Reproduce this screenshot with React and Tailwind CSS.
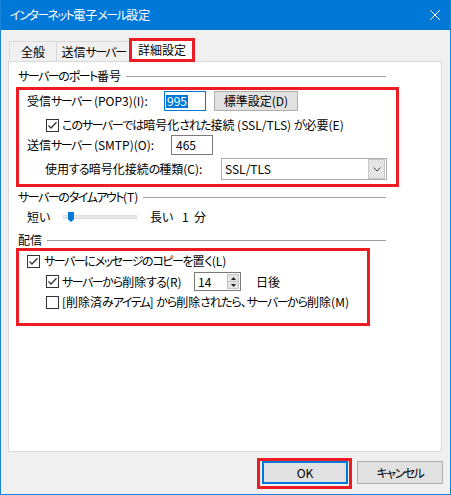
import React from "react";

const J = ({ children }) => {
  const parts = String(children).split(/([\u30A0-\u30FF]+|[\u3040-\u309F]+)/);
  return (
    <>
      {parts.map((p, i) => {
        if (!p) return null;
        if (/^[\u30A0-\u30FF]+$/.test(p))
          return (
            <span key={i} className="tracking-[-1.5px]">
              {p}
            </span>
          );
        if (/^[\u3040-\u309F]+$/.test(p))
          return (
            <span key={i} className="tracking-[-1px]">
              {p}
            </span>
          );
        return <React.Fragment key={i}>{p}</React.Fragment>;
      })}
    </>
  );
};

const Check = ({ checked }) => (
  <svg width="13" height="13" viewBox="0 0 13 13" className="shrink-0">
    <rect x="0.5" y="0.5" width="12" height="12" fill="white" stroke="#333333" />
    {checked && (
      <path d="M2.5 6.5 L5 9 L10.5 3.2" fill="none" stroke="#333333" strokeWidth="1.3" />
    )}
  </svg>
);

const GroupHeader = ({ label }) => (
  <div className="flex items-center h-[16px] ml-[2px] w-[368px] shrink-0">
    <span className="whitespace-nowrap">
      <J>{label}</J>
    </span>
    <div className="flex-1 h-px bg-[#a0a0a0] ml-[5px]" />
  </div>
);

export default function App() {
  return (
    <div className="w-[451px] h-[495px] flex flex-col bg-[#f0f0f0] border-x border-b border-[#1883d7] text-[12px] text-black font-['Noto_Sans_CJK_JP',sans-serif] [font-feature-settings:'palt'] leading-none select-none overflow-hidden">
      {/* Title bar */}
      <div className="h-[30px] -mx-px bg-[#0078d7] flex items-center pl-[10px] pr-[11px] text-white shrink-0">
        <span className="flex-1">
          <J>インターネット電子メール設定</J>
        </span>
        <svg width="10" height="10" viewBox="0 0 10 10">
          <path d="M0 0 L10 10 M10 0 L0 10" stroke="white" strokeWidth="1" />
        </svg>
      </div>

      {/* Tabs */}
      <div className="mt-[8px] h-[24px] pl-[8px] flex items-end -mb-px relative z-10 shrink-0">
        <div className="w-[48px] h-[21px] border border-b-0 border-[#d9d9d9] flex items-center justify-center">
          全般
        </div>
        <div className="w-[74px] h-[21px] border border-b-0 border-l-0 border-[#d9d9d9] flex items-center justify-center">
          <J>送信サーバー</J>
        </div>
        <div className="w-[66px] h-[24px] -ml-[2px] border-[3px] border-[#ed1c24] bg-white flex items-center justify-center">
          詳細設定
        </div>
      </div>

      {/* Panel */}
      <div className="ml-[7px] w-[434px] h-[391px] bg-white border border-[#d9d9d9] pt-[6px] pl-[7px] flex flex-col shrink-0">
        <GroupHeader label="サーバーのポート番号" />

        <div className="mt-[3px] w-[383px] border-[3px] border-[#ed1c24] pt-px pb-[4px] pl-[8px] flex flex-col">
          {/* Row 1 */}
          <div className="h-[20px] flex items-center">
            <span className="w-[137px] whitespace-nowrap">
              <J>受信サーバー (POP3)(I):</J>
            </span>
            <div className="w-[42px] h-[20px] border border-[#0078d7] flex items-center pl-px">
              <span className="bg-[#0078d7] text-white h-[13px] flex items-center px-px">995</span>
            </div>
            <div className="ml-[8px] w-[84px] h-[20px] border border-[#adadad] bg-[#e1e1e1] flex items-center justify-center">
              標準設定(D)
            </div>
          </div>
          {/* Row 2 */}
          <div className="mt-[5px] h-[18px] flex items-center ml-[19px] gap-[3px]">
            <Check checked />
            <span className="whitespace-nowrap">
              <J>このサーバーでは暗号化された接続 (SSL/TLS) が必要(E)</J>
            </span>
          </div>
          {/* Row 3 */}
          <div className="mt-px h-[20px] flex items-center">
            <span className="w-[144px] whitespace-nowrap">
              <J>送信サーバー (SMTP)(O):</J>
            </span>
            <div className="w-[42px] h-[20px] border border-[#7a7a7a] flex items-center pl-[4px]">465</div>
          </div>
          {/* Row 4 */}
          <div className="mt-[3px] h-[22px] flex items-center">
            <span className="ml-[18px] w-[176px] whitespace-nowrap">
              <J>使用する暗号化接続の種類(C):</J>
            </span>
            <div className="w-[166px] h-[22px] border border-[#adadad] bg-white flex items-center">
              <span className="flex-1 pl-[3px]">SSL/TLS</span>
              <div className="w-[17px] h-[20px] mr-px border border-[#c8c8c8] bg-[#e5e5e5] flex items-center justify-center">
                <svg width="8" height="5" viewBox="0 0 8 5">
                  <path d="M0.5 0.5 L4 4 L7.5 0.5" fill="none" stroke="#444" strokeWidth="1" />
                </svg>
              </div>
            </div>
          </div>
        </div>

        <div className="mt-[2px]">
          <GroupHeader label="サーバーのタイムアウト(T)" />
        </div>

        {/* Slider row */}
        <div className="mt-[4px] h-[16px] flex items-center ml-[11px]">
          <span className="w-[36px]">
            <J>短い</J>
          </span>
          <div className="relative w-[74px] h-[4px] bg-[#e7e7e7] border border-[#dcdcdc]">
            <svg className="absolute left-[4px] -top-[4px]" width="6" height="10" viewBox="0 0 6 10">
              <path d="M0 0 H6 V7.5 L3 10 L0 7.5 Z" fill="#0078d7" />
            </svg>
          </div>
          <span className="ml-[13px] w-[32px]">
            <J>長い</J>
          </span>
          <span>1&nbsp;&nbsp;分</span>
        </div>

        <div className="mt-[7px]">
          <GroupHeader label="配信" />
        </div>

        <div className="w-[354px] border-[3px] border-[#ed1c24] pt-[2px] pb-[13px] pl-[8px] flex flex-col">
          <div className="h-[16px] flex items-center gap-[4px]">
            <Check checked />
            <span className="whitespace-nowrap">
              <J>サーバーにメッセージのコピーを置く(L)</J>
            </span>
          </div>
          <div className="mt-[3px] h-[19px] flex items-center ml-[19px]">
            <div className="w-[148px] flex items-center gap-[3px]">
              <Check checked />
              <span className="whitespace-nowrap">
                <J>サーバーから削除する(R)</J>
              </span>
            </div>
            <div className="w-[47px] h-[19px] border border-[#7a7a7a] flex">
              <span className="flex-1 pl-[3px] flex items-center">14</span>
              <div className="w-[14px] flex flex-col p-px">
                <div className="flex-1 bg-[#e5e5e5] border border-[#c5c5c5] flex items-center justify-center">
                  <svg width="5" height="3" viewBox="0 0 5 3">
                    <path d="M0 3 L2.5 0 L5 3 Z" fill="#222" />
                  </svg>
                </div>
                <div className="flex-1 bg-[#e5e5e5] border border-t-0 border-[#c5c5c5] flex items-center justify-center">
                  <svg width="5" height="3" viewBox="0 0 5 3">
                    <path d="M0 0 L2.5 3 L5 0 Z" fill="#222" />
                  </svg>
                </div>
              </div>
            </div>
            <span className="ml-[15px]">日後</span>
          </div>
          <div className="mt-[3px] h-[16px] flex items-center ml-[19px] gap-[3px]">
            <Check />
            <span className="whitespace-nowrap">
              <J>[削除済みアイテム] から削除されたら、サーバーから削除(M)</J>
            </span>
          </div>
        </div>
      </div>

      {/* Buttons */}
      <div className="mt-[6px] pr-[7px] flex justify-end items-start">
        <div className="w-[95px] h-[31px] border-[3px] border-[#ed1c24] pl-[2px] pr-px pb-[2px]">
          <div className="w-[86px] h-[23px] border-2 border-[#0078d7] bg-[#e1e1e1] flex items-center justify-center">
            OK
          </div>
        </div>
        <div className="ml-[5px] mt-[3px] w-[86px] h-[23px] border border-[#adadad] bg-[#e1e1e1] flex items-center justify-center">
          <J>キャンセル</J>
        </div>
      </div>
    </div>
  );
}
